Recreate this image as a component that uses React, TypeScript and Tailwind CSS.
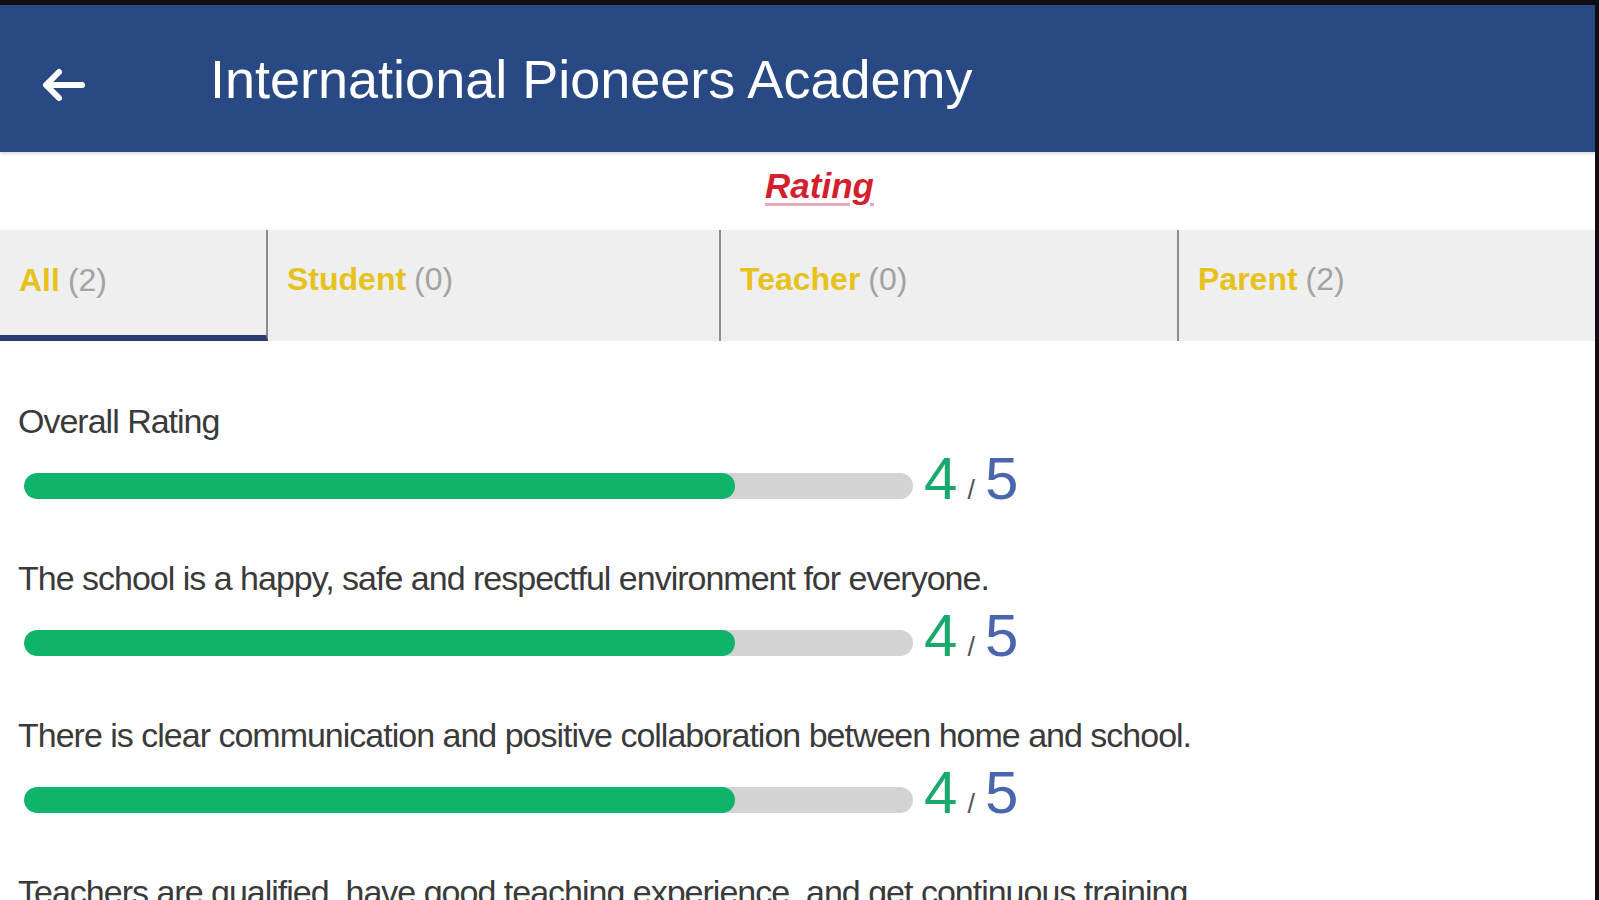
import React from 'react';

const tabs = [
  { label: 'All', count: 2, width: 'w-[268px]', active: true },
  { label: 'Student', count: 0, width: 'w-[453px]', active: false },
  { label: 'Teacher', count: 0, width: 'w-[458px]', active: false },
  { label: 'Parent', count: 2, width: 'flex-1', active: false },
];

const ratings = [
  { question: 'Overall Rating', score: 4 },
  { question: 'The school is a happy, safe and respectful environment for everyone.', score: 4 },
  { question: 'There is clear communication and positive collaboration between home and school.', score: 4 },
  { question: 'Teachers are qualified, have good teaching experience, and get continuous training.', score: 4 },
];

function BackArrow() {
  return (
    <svg width="44" height="36" viewBox="0 0 44 36" fill="none" className="mt-[13px] ml-[41px] shrink-0">
      <path d="M41 18H6" stroke="white" strokeWidth="6" strokeLinecap="round" />
      <path d="M18 5L5 18L18 31" stroke="white" strokeWidth="6" strokeLinecap="round" strokeLinejoin="round" />
    </svg>
  );
}

function RatingRow({ question, score }: { question: string; score: number }) {
  const pct = (score / 5) * 100;
  return (
    <div className="flex flex-col mb-[42px]">
      <div className="h-[40px] leading-[40px] text-[34px] tracking-[-1px] text-[#3a3a3a] whitespace-nowrap">
        {question}
      </div>
      <div className="mt-[15px] h-[60px] flex items-center">
        <div className="ml-[6px] w-[889px] h-[26px] rounded-full bg-[#d3d3d3] overflow-hidden">
          <div className="h-full rounded-full bg-[#0db46a]" style={{ width: `${pct}%` }} />
        </div>
        <div className="ml-[11px] -mt-[4px] flex items-baseline leading-[60px]">
          <span className="text-[60px] text-[#1aa86c]">{score}</span>
          <span className="text-[27px] text-[#555] mx-[10px]">/</span>
          <span className="text-[60px] text-[#4a66ad]">5</span>
        </div>
      </div>
    </div>
  );
}

export default function App() {
  return (
    <div
      className="w-[1599px] h-[900px] bg-[#0e0e16] pt-[5px] pr-[4px] overflow-hidden"
      style={{ fontFamily: '"Liberation Sans", Arial, sans-serif' }}
    >
      <div className="h-full bg-white overflow-hidden">
        {/* Header */}
        <div className="h-[147px] bg-[#294984] flex items-center shadow-[0_2px_3px_rgba(0,0,0,0.15)]">
          <BackArrow />
          <h1 className="ml-[125px] text-[54px] leading-none text-white">International Pioneers Academy</h1>
        </div>

        {/* Title */}
        <div className="h-[78px] flex items-center justify-center pl-[44px]">
          <span className="text-[35px] font-bold italic text-[#d41f2f] underline decoration-[#e8aab5] decoration-[3px] underline-offset-[5px] leading-none -mt-[12px]">
            Rating
          </span>
        </div>

        {/* Tabs */}
        <div className="h-[111px] flex bg-[#efefef]">
          {tabs.map((t, i) => (
            <div
              key={t.label}
              className={`${t.width} flex items-center pl-[19px] text-[32px] ${
                t.active ? 'border-b-[6px] border-b-[#2c3d72] pb-[6px]' : 'pb-[14px]'
              } ${i < tabs.length - 1 ? 'border-r-2 border-r-[#8c8c8c]' : ''}`}
            >
              <span className="font-bold text-[#e7c11c]">{t.label}</span>
              <span className="ml-[8px] text-[#a3a3a3]">({t.count})</span>
            </div>
          ))}
        </div>

        {/* Ratings */}
        <div className="pl-[18px] pt-[60px]">
          {ratings.map((r) => (
            <RatingRow key={r.question} question={r.question} score={r.score} />
          ))}
        </div>
      </div>
    </div>
  );
}
